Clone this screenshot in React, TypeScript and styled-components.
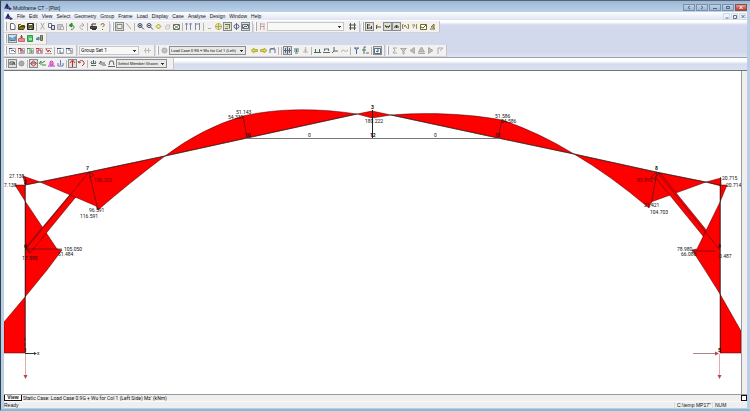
import React from 'react';
import styled, { createGlobalStyle } from 'styled-components';

const GlobalStyle = createGlobalStyle`
  * { box-sizing: border-box; }
  html, body, #root { height: 100%; }
  body { margin: 0; overflow: hidden; font-family: "Liberation Sans", Arial, sans-serif; font-size: 5px; color: #111; }
  button, select { font: inherit; color: inherit; margin: 0; padding: 0; border: 0; background: none; }
`;

const compact = 'Roboto, "Liberation Sans", sans-serif';

const Window = styled.div`
  height: 100%;
  display: flex;
  flex-direction: column;
  background: #b9cfe6;
  border-top: 1px solid #566575;
  border-left: 1px solid #34404d;
  border-bottom: 2px solid #82bdd8;
`;
const TitleBar = styled.header`
  flex: none;
  height: 11px;
  display: flex;
  align-items: center;
  gap: 1px;
  padding: 0 3px;
  background: linear-gradient(#9db8d5, #bad1e9);
`;
const Title = styled.h1`
  flex: 1;
  margin: 0;
  padding-top: 3px;
  font-size: 5px;
  font-weight: 400;
  line-height: 8px;
`;
const WindowButtons = styled.div`
  display: flex;
  gap: 1px;
  padding-top: 2px;
`;
const WindowButton = styled.button<{ $close?: boolean }>`
  width: 12px;
  height: 7px;
  display: grid;
  place-items: center;
  border: 1px solid ${p => (p.$close ? '#8b4c4b' : '#7890ab')};
  background: ${p => (p.$close ? 'linear-gradient(#dc9c8f, #bd3b29)' : 'linear-gradient(#bfd1e4, #9fb8d2)')};
  color: ${p => (p.$close ? '#fff' : '#51657c')};
`;
const Body = styled.div`
  flex: 1;
  min-height: 0;
  margin: 0 3px;
  display: flex;
  flex-direction: column;
  background: #efefef;
`;
const MenuBar = styled.nav`
  flex: none;
  height: 8px;
  display: flex;
  align-items: center;
  gap: 4px;
  padding: 0 1px;
  background: linear-gradient(#fdfdff, #dfe4f2);
`;
const MenuItem = styled.button`
  line-height: 8px;
  white-space: nowrap;
`;
const ChildButtons = styled.div`
  display: flex;
  gap: 1px;
  margin-left: auto;
`;
const ChildButton = styled.button`
  width: 7px;
  height: 7px;
  display: grid;
  place-items: center;
  background: #edf3f8;
  border: 1px solid #cfdbe6;
  color: #5c7284;
`;
const Dock = styled.div`
  flex: none;
  display: flex;
  flex-direction: column;
  padding-top: 1px;
  background: linear-gradient(#fff 2px, #d3d9ed 5px, #d3d9ed 32px, #dfe4f2);
  border-bottom: 1px solid #9da2ad;
`;
const LowerDock = styled(Dock)`
  padding: 0;
  background: linear-gradient(#fff 3px, #d6dcee 6px, #dce1f0);
  border-bottom: 1px solid #70757d;
`;
const Row = styled.div`
  height: 12px;
  display: flex;
  gap: 1px;
`;
const Group = styled.div`
  display: flex;
  align-items: center;
  padding: 0 2px 0 1px;
  background: #f2f1f0;
  border-right: 1px solid #c3c4c9;
  border-bottom: 1px solid #d4d4d8;
`;
const Grip = styled.span`
  width: 2px;
  height: 9px;
  margin-right: 1px;
  border-left: 1px solid #fff;
  border-right: 1px solid #aaa;
`;
const Separator = styled.span`
  width: 1px;
  height: 8px;
  margin: 0 1px;
  background: #b5b5b5;
`;
const ToolButton = styled.button<{ $on?: boolean }>`
  width: 9px;
  height: 9px;
  display: grid;
  place-items: center;
  background: ${p => (p.$on ? '#dfdfda' : 'transparent')};
  box-shadow: ${p => (p.$on ? 'inset 0 0 0 1px #858b92' : 'none')};
`;
const Glyph = styled.svg`
  display: block;
  width: 9px;
  height: 9px;
  overflow: visible;
`;
const Combo = styled.select<{ $width: number; $raised?: boolean }>`
  appearance: none;
  width: ${p => p.$width}px;
  height: 9px;
  margin: 0 4px 0 0;
  padding: 0 6px 0 1px;
  border: 1px solid ${p => (p.$raised ? '#8c8c8c' : '#c6c6c6')};
  background:
    linear-gradient(#333, #333) right 2px top 3px / 3px 1px no-repeat,
    linear-gradient(#333, #333) right 3px top 4px / 1px 1px no-repeat,
    ${p => (p.$raised ? '#e9e9e8' : '#f8f8f8')};
  font-family: ${compact};
  font-size: ${p => (p.$raised ? 4 : 5)}px;
  line-height: 7px;
`;
const Workspace = styled.main`
  flex: 1;
  min-height: 0;
  display: flex;
`;
const Plot = styled.svg`
  flex: 1;
  min-width: 0;
  height: 100%;
  background: #fff;
  font-family: ${compact};
`;
const ScrollTrack = styled.div`
  flex: none;
  width: 6px;
  background: #efeff0;
  border-left: 1px solid #999;
`;
const TabStrip = styled.div`
  flex: none;
  height: 7px;
  display: flex;
  align-items: center;
  gap: 1px;
  border-top: 1px solid #9a9a9a;
  font-family: ${compact};
  line-height: 6px;
  white-space: pre;
`;
const ViewTab = styled.button`
  width: 18px;
  height: 6px;
  border: 1px solid #111;
  border-top: 0;
  background: #fff;
  font-family: "Liberation Sans", Arial, sans-serif;
  font-weight: 700;
  line-height: 5px;
`;
const SizeBox = styled.span`
  width: 6px;
  height: 6px;
  margin-left: auto;
  border: 1px solid #111;
  background: #fff;
`;
const StatusBar = styled.footer`
  flex: none;
  height: 7px;
  display: flex;
  align-items: center;
  line-height: 7px;
  border-top: 1px solid #fafafa;
`;
const StatusReady = styled.span`
  flex: 1;
`;
const StatusCell = styled.span<{ $width: number }>`
  width: ${p => p.$width}px;
  padding-left: 2px;
  border-left: 1px solid #ddd;
  white-space: nowrap;
`;
const BottomEdge = styled.div`
  flex: none;
  height: 1px;
`;

/* Each stroke is [path, stroke colour, fill colour] on a 9-unit grid. */
type Stroke = [string, string, string?];
const K = '#333';
const B = '#36479e';
const G = '#318a36';
const R = '#d42222';
const Y = '#b5b33c';
const S = '#aaa';
const frame = (c: string): Stroke => ['M1.5 2.5h6v5h-6z', c, '#fff'];

const icons: Record<string, Stroke[]> = {
  New: [['M2.5 1.5h3l1.5 2v4H2.5z', '#667', '#fff']],
  Open: [['M1.5 7.5v-5h2l1 1h3v1', '#554a18', '#e8db69'], ['M1.5 7.5l1.5-3h5l-1.5 3z', '#48410f', '#857b27']],
  Save: [['M1.5 1.5h6v6h-6z', '#222', '#64643c'], ['M3 2.5h3', '#fff'], ['M3.5 6.5h2', '#ccc']],
  Cut: [['M3 1l2.5 5M6 1L3.5 6M3 6v1.5M6 6v1.5', S]],
  Copy: [['M1.5 1.5h3v4h-3z', '#68748c', '#fff'], ['M4.5 3.5h3v4h-3z', '#43506c', '#dbe2ef']],
  Paste: [['M1.5 2.5h5v5h-5z', S, '#ccc'], ['M4.5 4.5h3v3h-3z', S, '#eee']],
  Undo: [['M3 7.5c4 0 4-5 0-4.5', G], ['M1 3.5L4 1v4z', G, G]],
  Redo: [['M6 7.5c-4 0-4-5 0-4.5M5 1l2 2-2 2', S]],
  Print: [['M1.5 4.5h6v2h-6z', K, '#555'], ['M3 4V2h4M3 7.5h4', K]],
  Help: [['M3 3c0-2 4-2 3 .5L4.5 5', '#6b6719'], ['M4.5 7v1', '#6b6719'], ['M5 2.5h1', Y]],
  'Select area': [['M2 2.5h5v4H2z', '#888', '#eeeedd']],
  Line: [['M2 1l5 6', S]],
  'Zoom in': [['M2 3.5a2 2 0 1 0 4 0a2 2 0 1 0-4 0M5.5 5L8 7.5M3 3.5h2M4 2.5v2', '#405163']],
  'Zoom out': [['M2 3.5a2 2 0 1 0 4 0a2 2 0 1 0-4 0M5.5 5L8 7.5M3 3.5h2', '#405163']],
  Pan: [['M4.5 2l2.5 2.5L4.5 7 2 4.5z', '#a9a73a', '#e3e078'], ['M4.5 4v1', '#fff']],
  Hand: [['M2 4l1 3h3l1-4M4 5V2M6 5V2', '#c2c2bb']],
  Fit: [frame('#607078'), ['M2 3l5 4M7 3L2 7', '#777c35'], ['M4 4.5h1', Y]],
  Columns: [['M2.5 1v7M6.5 1v7M1 2h3M5 2h3', '#7c89ad']],
  Bays: [['M2.5 1v7M6.5 1v7M2 2h5', '#7c89ad']],
  Dash: [['M3 6.5h3', S]],
  Sphere: [['M1.5 4.5a3 3 0 1 0 6 0a3 3 0 1 0-6 0', '#bbba51', '#eeecad'], ['M4.5 1v7M1 4.5h7', '#a9a861']],
  Layers: [['M2 2.5h5M2 6.5h3M6.5 2.5v4', '#777333'], ['M3 4.5h2', Y]],
  Axis: [['M4.5 1v7M2 4.5a2.5 2 0 1 0 5 0a2.5 2 0 1 0-5 0', '#596486']],
  Render: [['M1.5 2.5h6v4h-6z', '#607089', '#dce8ec'], ['M2 6l2-2 1 1 2-2', '#53675f']],
  Section: [['M2.5 1v7M2 2h5M3 4.5h3M6 3v5', '#c9a0a0']],
  Grid: [['M2.5 1v7M6.5 1v7M1 3h7M1 6h7', '#555']],
  Beam: [['M2.5 2v5M2 6h5M6.5 4v3M3 3h2', '#4b4420']],
  Joint: [['M2.5 3v4M3 5h2M6 4v2', '#655b25'], ['M3 3h1', Y]],
  Member: [['M2 4.5h5M2 3l2 3M7 3L5 6', '#605620']],
  Plate: [['M2 5h5M4.5 3v3', '#3b351b'], ['M3 4h3', '#555']],
  Label: [['M2.5 2.5h-1v4h1M6.5 2.5h1v4h-1M3 5l1-2 2 3', '#8d8331']],
  Angle: [['M2 3h3l-2 3M6.5 2v5', '#948c45']],
  Graph: [frame('#706824'), ['M2 5l2 1 3-3', '#655b25']],
  Text: [['M2 7h5M3 5l3-3v5M3 5h3', '#766d27']],
  Frame: [['M1.5 6.5v-3l3 1 3-2v4z', '#5e91c2', '#65b0df'], ['M2 6.5h5', '#54707d']],
  Loads: [['M1.5 4.5h6v3h-6z', '#cc6a70', '#ea8b8b'], ['M4.5 1v3M3 3h3', '#89454a']],
  Plot: [['M1.5 1.5h5v6h-5z', '#2c9f42', '#54c66a'], ['M3 5h3', '#fff']],
  Results: [['M1 5l3-2v3z', '#338297', '#63b5bf'], ['M5.5 1.5h2v5h-2z', '#776138', '#6fb08e']],
  'Axial view': [frame(S), ['M1 2.5h3', B], ['M3 5l2-1 2 2', '#5c5a6d']],
  'Shear view': [frame(S), ['M1 2.5h3', R], ['M4 3v4M3 4h3v3', '#933454']],
  'Load view': [frame(S), ['M1 2.5h3', G], ['M3 4h3v3M3 6h3', G]],
  'Moment view': [frame(S), ['M1 2.5h3', R], ['M3 4h3M3 7V4M6 7V4', '#ac1536']],
  'Deflection view': [['M1 2.5h7M1 7.5h7', S], ['M2 3l2 3 1-2 2 2', R]],
  'Plan view': [frame(S), ['M1 2.5h4', B], ['M4 4v3h3', '#6c7588']],
  'Elevation view': [frame(S), ['M1 2.5h4', B], ['M3 4h3v3', '#6c7588']],
  'Group grid': [['M2.5 2v5M5.5 2v5M1 4.5h7', '#bbb']],
  Case: [['M2 4.5a2.5 2.5 0 1 0 5 0a2.5 2.5 0 1 0-5 0', S, '#c2c2c2']],
  Previous: [['M1 4.5L4 2v1.5h3.5v2H4V7z', '#b0b042', '#ddd34a']],
  Next: [['M8 4.5L5 2v1.5H1.5v2H5V7z', '#b0b042', '#ddd34a']],
  Envelope: [['M2 7V3h5v4M2 3l5-1', '#6671a2']],
  'All loads': [['M1 4.5h7M4.5 1v7M2.5 2v5M6.5 2v5', '#52637a']],
  'Joint loads': [['M2 3h5M4.5 3v3M2 5h5M3 7h3', '#498072']],
  'Thermal loads': [['M4.5 1v6M2 6h5M3 4h3', '#b5b5b5']],
  Reactions: [['M1 6.5h7M2.5 3v3M6.5 3v3', '#416c66']],
  'Distributed loads': [['M1 6.5h7M2 3h5M2.5 3v2M6.5 3v2', '#55716c']],
  Axes: [['M3 1v4h4M3 5L1 7', '#526771']],
  Curve: [['M1 6c3-5 3 2 7-2', '#aaa']],
  Shape: [['M2 2h5M3 2l1.5 2L6 2M4.5 4v4', '#4b66a2']],
  Formula: [['M5 1H3v7M1 4h4M5 7h3', '#4d7463']],
  Values: [frame('#577087'), ['M5 3v3M3 5l2 1', '#456']],
  Sum: [['M7 2H3l2 2-2 3h4', S]],
  Filter: [['M1.5 2.5h6L5 5v3H4V5z', S, '#ccc']],
  Back: [['M6.5 1.5v6L2 4.5z', S, '#bbb']],
  Up: [['M4.5 1l3 5h-6zM1 7.5h7', S, '#bbb']],
  Forward: [['M2.5 1.5v6L7 4.5z', S, '#bbb']],
  Flag: [['M3 8V2h5L5 5', S]],
  'No load': [['M2 3h4M2 3v3M4 6l2-3 1 3M3 5h3', '#555']],
  'All cases': [['M2 4.5a2.5 2.5 0 1 0 5 0a2.5 2.5 0 1 0-5 0', '#999', '#aaa']],
  Rotate: [['M1.5 4.5l3-2.5 3 2.5-3 2.5z', R], ['M2 4h5', '#734d55']],
  'Local load': [['M1 5l2-3v4M4 4l3-2M4 6h4', G]],
  'Global load': [['M1 7h7', '#b72bc5'], ['M3 6V3l1.5-1L6 3v3z', '#c33eca', '#ec83df']],
  Support: [['M4.5 1v5M2 4v3h5V4', '#6077b3']],
  Force: [['M4.5 8V2M2 4l2.5-3L7 4', R]],
  Moment: [['M2 4c0-4 6-3 5 1l-2 2M1 2l1 2 2-1', '#a14343']],
  Restraint: [['M2 4.5h5M4.5 1v3M2 6.5h5M2 4l1-2M7 4L6 2', '#566']],
  Spring: [['M1 5l2-3v4M4 4h3M4 6h4', '#566']],
  Base: [['M1 7.5h7M2 6l1-4h3l1 4', '#566']],
};

const Drawing = ({ name }: { name: string }) => (
  <Glyph viewBox="0 0 9 9" aria-hidden="true">
    {icons[name].map(([d, stroke, fill], i) => (
      <path key={i} d={d} stroke={stroke} fill={fill || 'none'} strokeWidth="1" />
    ))}
  </Glyph>
);

/* "|" puts a separator between tools; a leading "*" marks a pressed tool. */
const Tools = ({ names }: { names: string[] }) => (
  <>
    {names.map((raw, i) => {
      if (raw === '|') return <Separator key={i} />;
      const on = raw.startsWith('*');
      const name = on ? raw.slice(1) : raw;
      return (
        <ToolButton key={i} type="button" $on={on} aria-label={name} aria-pressed={on}>
          <Drawing name={name} />
        </ToolButton>
      );
    })}
  </>
);

const Logo = () => (
  <svg width="8" height="7" viewBox="0 0 8 7" aria-hidden="true">
    <path d="M3 0l2 4H1z" fill="#14206c" />
    <path d="M0 5l3-2 2 3H1z" fill="#222f8e" />
    <path d="M4 3l4 3-3 1z" fill="#343045" />
    <path d="M1 5h2v1H1z" fill="#c34650" />
  </svg>
);

const WindowMark = ({ d }: { d: string }) => (
  <svg width="6" height="5" viewBox="0 0 6 5" aria-hidden="true">
    <path d={d} fill="none" stroke="currentColor" />
  </svg>
);

const menus = ['File', 'Edit', 'View', 'Select', 'Geometry', 'Group', 'Frame', 'Load', 'Display', 'Case', 'Analyse', 'Design', 'Window', 'Help'];

const diagrams = [
  'M23 176L40 182L25 185Z',
  'M15 185H25V201Z',
  'M25 201L57 249L62 250L47 270L25 297Z',
  'M25 297L4 322V353H25Z',
  'M26 247L88 173L93 176L30 253Z',
  'M40 182L89 172L165 156Q128 184 98 210L96 206Z',
  'M165 156Q202 128 243 116C278 108 318 108 357 114L247 138Z',
  'M357 114L372 111L391 115L372 118Z',
  'M391 115C430 112 470 114 502 120Q538 132 574 154L498 138Z',
  'M574 154L656 172L706 182L651 202L649 208Q610 175 574 154Z',
  'M706 182L721 178V186Z',
  'M720 185H727L720 202Z',
  'M660 173L720 247L716 252L655 177Z',
  'M720 202L697 249L692 250L705 270L720 294Z',
  'M720 294L741 331V353H720Z',
];

type Label = [number, number, string];
const labels: Label[] = [
  [228, 119, '54.331'], [236, 114, '51.143'], [495, 118, '51.586'], [501, 123, '54.586'],
  [365, 123, '180.222'], [9, 178, '27.138'], [4, 187, '7.138'], [89, 212, '96.591'],
  [80, 218, '116.591'], [64, 251, '105.050'], [58, 256, '61.484'], [22, 260, '17.595'],
  [644, 207, '21.421'], [650, 214, '104.703'], [722, 180, '20.715'], [726, 187, '20.714'],
  [677, 251, '78.980'], [681, 256, '66.086'], [719, 258, '0.487'],
  [308, 137, '0'], [434, 137, '0'], [37, 355, 'x'],
];
const memberValues: Label[] = [[94, 182, '136.222'], [637, 182, '83.892']];
const nodes: Label[] = [
  [86, 170, '7'], [655, 170, '8'], [24, 248, '6'], [718, 248, '9'], [371, 109, '3'],
  [245, 137, '10'], [370, 137, '12'], [495, 137, '11'], [24, 184, '2'],
  [24, 352, '1'], [718, 352, '5'],
];

const Labels = ({ items }: { items: Label[] }) => (
  <>
    {items.map(([x, y, t]) => <text key={`${x}-${y}`} x={x} y={y}>{t}</text>)}
  </>
);

const MomentPlot = () => (
  <Plot viewBox="4 71 737 323" preserveAspectRatio="xMidYMin meet" role="img" aria-label="Bending moment diagram of the frame" fontSize="5">
    {diagrams.map(d => (
      <path key={d} d={d} fill="#ff0000" stroke="#400" strokeWidth="0.5" />
    ))}
    <g fill="none" stroke="#222" strokeWidth="0.6">
      <path d="M25.5 177V353M720.5 177V353" />
      <path d="M25 185L89 172L165 156L247 138L357 114M391 115L498 138L574 154L656 172L720 185" />
      <path d="M372.5 110V138" strokeWidth="1" />
      <path d="M25 250L89 172L98 210M89 178L94 175L89 172M30 253L25 249H62" />
      <path d="M720 250L657 172L651 205M657 172L651 177L656 180M715 251H692" />
      <path d="M243 116L247 138M502 120L498 138" />
    </g>
    <path d="M247 138.5H498" stroke="#777" />
    <g stroke="#333" fill="#333">
      <path d="M25 353.5H36" /><path d="M34 352l3 1.5-3 1.5z" stroke="none" />
      <path d="M25 338v3M25 343v3" />
    </g>
    <g stroke="#e3acac"><path d="M25.5 354V377M719.5 354V377" /></g>
    <path d="M693 353.5H716" stroke="#a88" />
    <g fill="#b54455">
      <path d="M23.5 375h4l-2 4zM717.5 375h4l-2 4zM715 351.5l4 2-4 2z" />
    </g>
    <g fill="#111"><Labels items={labels} /></g>
    <g fill="#600"><Labels items={memberValues} /></g>
    <g fill="#111" fontWeight="700"><Labels items={nodes} /></g>
  </Plot>
);

export default function App() {
  return (
    <>
      <GlobalStyle />
      <Window>
        <TitleBar>
          <Logo />
          <Title>Multiframe CT - [Plot]</Title>
          <WindowButtons>
            <WindowButton aria-label="Previous window"><WindowMark d="M4 1L2 2.5 4 4" /></WindowButton>
            <WindowButton aria-label="Next window"><WindowMark d="M2 1l2 1.5L2 4" /></WindowButton>
            <WindowButton aria-label="Minimize"><WindowMark d="M1 3.5h4" /></WindowButton>
            <WindowButton aria-label="Restore"><WindowMark d="M1.5 1.5h3v2h-3z" /></WindowButton>
            <WindowButton aria-label="Close" $close><WindowMark d="M1.5 1l3 3M4.5 1l-3 3" /></WindowButton>
          </WindowButtons>
        </TitleBar>
        <Body>
          <MenuBar>
            <Logo />
            {menus.map(m => <MenuItem key={m} type="button">{m}</MenuItem>)}
            <ChildButtons>
              <ChildButton aria-label="Minimize plot"><WindowMark d="M1.5 4h3" /></ChildButton>
              <ChildButton aria-label="Restore plot"><WindowMark d="M1.5 1.5h3v3h-3z" /></ChildButton>
              <ChildButton aria-label="Close plot"><WindowMark d="M1.5 1l3 3M4.5 1l-3 3" /></ChildButton>
            </ChildButtons>
          </MenuBar>
          <Dock>
            <Row>
              <Group><Grip /><Tools names={['New', 'Open', 'Save', '|', 'Cut', 'Copy', 'Paste', '|', 'Undo', 'Redo', '|', 'Print', 'Help']} /></Group>
              <Group><Grip /><Tools names={['*Select area', 'Line', '|', 'Zoom in', 'Zoom out', 'Pan', 'Hand', 'Fit', '|', 'Columns', 'Bays', '|', 'Dash', 'Sphere', '*Layers', 'Axis', '*Render']} /></Group>
              <Group>
                <Grip /><Tools names={['Section']} />
                <Combo $width={77} aria-label="Section name" defaultValue=""><option value="" /></Combo>
                <Tools names={['Grid']} />
              </Group>
              <Group><Grip /><Tools names={['*Beam', 'Joint', '*Member', '*Plate', 'Label', 'Angle', 'Graph', 'Text']} /></Group>
            </Row>
            <Row>
              <Group><Grip /><Tools names={['*Frame', 'Loads', 'Plot', 'Results']} /></Group>
            </Row>
            <Row>
              <Group><Grip /><Tools names={['Axial view', 'Shear view', 'Load view', 'Moment view', 'Deflection view', '|', 'Plan view', 'Elevation view']} /></Group>
              <Group>
                <Combo $width={60} aria-label="Group set"><option>Group Set 1</option></Combo>
                <Tools names={['Group grid']} />
              </Group>
              <Group>
                <Grip /><Tools names={['Case']} />
                <Combo $width={77} $raised aria-label="Load case"><option>Load Case 0.9G + Wu for Col 1 (Left)</option></Combo>
                <Tools names={['Previous', 'Next', 'Envelope', '|', '|', '*All loads', 'Joint loads', 'Thermal loads', '|', 'Reactions', 'Distributed loads', 'Axes', 'Curve', '|', 'Shape', 'Formula', '|', '*Values']} />
              </Group>
              <Group><Grip /><Tools names={['Sum', 'Filter', 'Back', 'Up', 'Forward', 'Flag']} /></Group>
            </Row>
          </Dock>
          <LowerDock>
            <Row>
              <Group>
                <Grip /><Tools names={['*No load', 'All cases', '|', '*Rotate', 'Local load', 'Global load', 'Support', '|', '*Force', 'Moment', '|', 'Restraint', 'Spring', 'Base']} />
                <Combo $width={51} $raised aria-label="Member display"><option>Select Member Shown</option></Combo>
              </Group>
            </Row>
          </LowerDock>
          <Workspace>
            <MomentPlot />
            <ScrollTrack />
          </Workspace>
          <TabStrip>
            <ViewTab type="button">View</ViewTab>
            <span>{"Static Case: Load Case 0.9G + Wu for Col 1 (Left Side) Mz' (kNm)"}</span>
            <SizeBox />
          </TabStrip>
          <StatusBar>
            <StatusReady>Ready</StatusReady>
            <StatusCell $width={38}>C:\temp MP17"</StatusCell>
            <StatusCell $width={35}>NUM</StatusCell>
          </StatusBar>
        </Body>
        <BottomEdge />
      </Window>
    </>
  );
}
